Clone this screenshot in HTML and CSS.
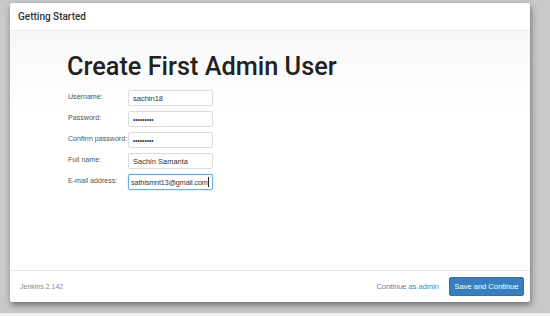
FILE: index.html
```html
<!DOCTYPE html>
<html lang="en">
<head>
    <meta charset="UTF-8">
    <title>Getting Started - Create First Admin User</title>
    <link rel="stylesheet" href="styles.css">
</head>
<body>
    <div class="modal">
        <div class="modal-header">
            <div class="modal-title">Getting Started</div>
        </div>

        <div class="modal-body">
            <h1>Create First Admin User</h1>

            <form class="admin-form">
                <label class="form-label" for="username">Username:</label>
                <input class="form-input" type="text" id="username" value="sachin18">

                <label class="form-label" for="password1">Password:</label>
                <input class="form-input" type="password" id="password1" value="123456789">

                <label class="form-label" for="password2">Confirm password:</label>
                <input class="form-input" type="password" id="password2" value="123456789">

                <label class="form-label" for="fullname">Full name:</label>
                <input class="form-input" type="text" id="fullname" value="Sachin Samanta">

                <label class="form-label" for="email">E-mail address:</label>
                <div class="form-input focused">sathismnt13@gmail.com<span class="caret"></span></div>
            </form>
        </div>

        <div class="modal-footer">
            <div class="version">Jenkins 2.142</div>
            <div class="actions">
                <a class="link-button" href="#">Continue as admin</a>
                <button class="save-button" type="button">Save and Continue</button>
            </div>
        </div>
    </div>
    <div class="bottom-strip"></div>
</body>
</html>
```

FILE: styles.css
```css
* {
    margin: 0;
    padding: 0;
    box-sizing: border-box;
}

body {
    background: #c9c9c9;
    width: 550px;
    height: 316px;
    overflow: hidden;
    font-family: "Liberation Sans", Arial, sans-serif;
}

.modal {
    margin: 3px 0 0 10px;
    width: 520px;
    height: 299px;
    background: #fff;
    border-radius: 2px;
    box-shadow: 1px 3px 6px rgba(0, 0, 0, 0.45);
    display: flex;
    flex-direction: column;
}

.modal-header {
    height: 28px;
    border-bottom: 1px solid #ececec;
    display: flex;
    align-items: center;
    padding-left: 8px;
}

.modal-title {
    font-family: Roboto, sans-serif;
    font-size: 10px;
    font-weight: 500;
    color: #333;
}

.modal-body {
    flex: 1;
    background: linear-gradient(180deg, #f7f7f7 0%, #ffffff 35%);
    padding: 21px 0 0 57px;
}

.modal-body h1 {
    font-family: Roboto, sans-serif;
    font-size: 25.3px;
    line-height: 29px;
    font-weight: 500;
    color: #222;
    margin-bottom: 9px;
}

.admin-form {
    display: grid;
    grid-template-columns: 61px 85px;
    row-gap: 5px;
    align-items: center;
}

.form-label {
    font-size: 7.1px;
    color: #555;
    padding-left: 1px;
    padding-bottom: 2px;
    white-space: nowrap;
}

.form-input {
    height: 16px;
    border: 1px solid #dcdcdc;
    border-radius: 2px;
    background: #fff;
    font-family: "Liberation Sans", Arial, sans-serif;
    font-size: 7.5px;
    color: #333;
    padding: 0 4px;
    outline: none;
}

input[type="password"].form-input {
    font-size: 6.5px;
    letter-spacing: 0;
}

.form-input.focused {
    display: flex;
    align-items: center;
    border-color: #66afe9;
    box-shadow: 0 0 2px rgba(102, 175, 233, 0.6);
    white-space: nowrap;
    overflow: hidden;
    padding: 0 2px;
    font-size: 7.2px;
    letter-spacing: -0.1px;
}

.caret {
    display: inline-block;
    width: 1px;
    height: 10px;
    background: #222;
}

.modal-footer {
    height: 32px;
    border-top: 1px solid #e4e4e4;
    display: flex;
    align-items: center;
    justify-content: space-between;
    padding: 0 6px 0 10px;
}

.version {
    font-size: 7px;
    color: #8a8a8a;
}

.actions {
    display: flex;
    align-items: center;
    gap: 10px;
}

.link-button {
    font-size: 7.5px;
    color: #4f7fb8;
    text-decoration: none;
}

.save-button {
    width: 75px;
    height: 19px;
    background: #3a7ec0;
    border: 1px solid #336fa9;
    border-radius: 2px;
    color: #fff;
    font-family: "Liberation Sans", Arial, sans-serif;
    font-size: 7.5px;
}

.bottom-strip {
    margin-top: 11px;
    height: 3px;
    background: #ededed;
}
```
